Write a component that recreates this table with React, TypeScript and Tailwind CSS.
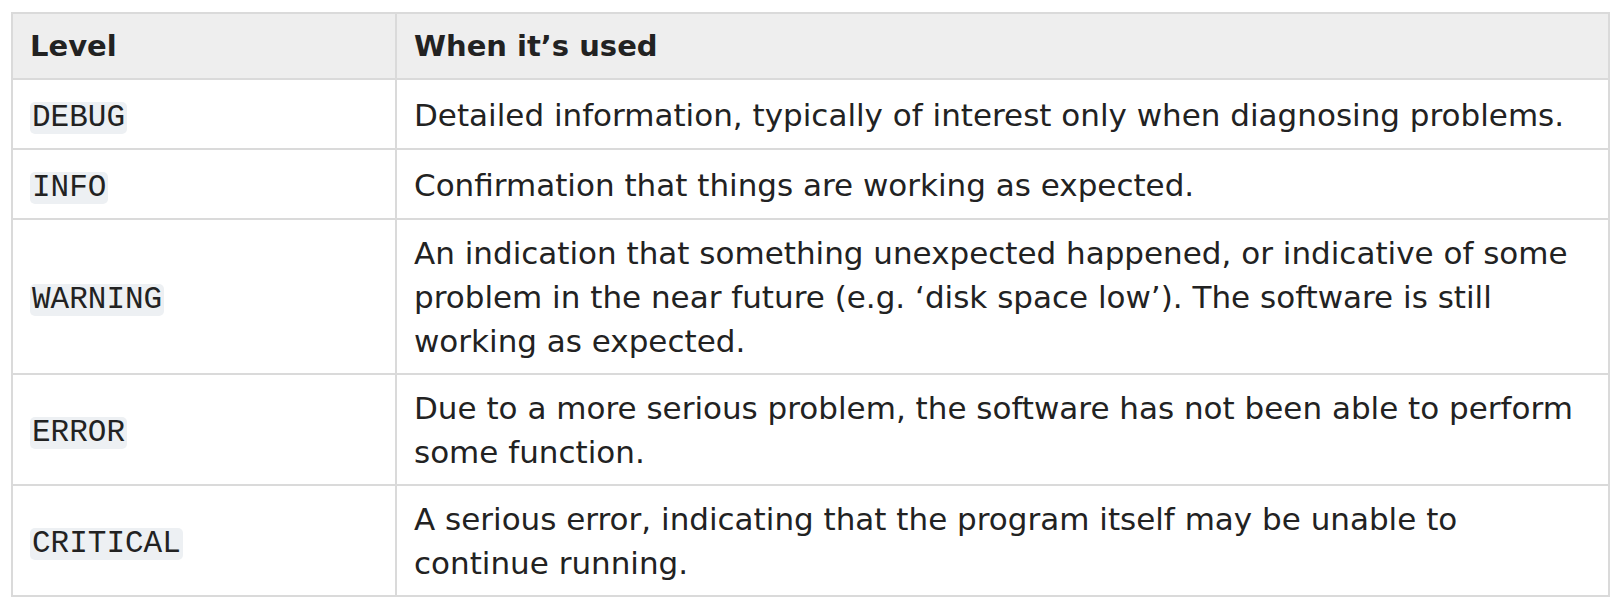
import React from 'react';

interface LevelRow {
  level: string;
  text: string;
}

const rows: LevelRow[] = [
  { level: 'DEBUG', text: 'Detailed information, typically of interest only when diagnosing problems.' },
  { level: 'INFO', text: 'Confirmation that things are working as expected.' },
  {
    level: 'WARNING',
    text: 'An indication that something unexpected happened, or indicative of some problem in the near future (e.g. \u2018disk space low\u2019). The software is still working as expected.',
  },
  { level: 'ERROR', text: 'Due to a more serious problem, the software has not been able to perform some function.' },
  { level: 'CRITICAL', text: 'A serious error, indicating that the program itself may be unable to continue running.' },
];

const App: React.FC = () => {
  return (
    <div className="bg-white w-[1624px] h-[616px] pt-[12px] pl-[11px] font-['DejaVu_Sans',sans-serif] text-[#222222]">
      <table className="w-[1599px] border-collapse border-2 border-[#dadada] text-[31px] leading-[44px]">
        <thead>
          <tr className="bg-[#eeeeee]">
            <th className="w-[384px] border-2 border-[#dadada] px-[17px] py-[10px] text-left text-[29px] font-bold">Level</th>
            <th className="border-2 border-[#dadada] px-[17px] py-[10px] text-left text-[29px] font-bold">When it’s used</th>
          </tr>
        </thead>
        <tbody>
          {rows.map(row => (
            <tr key={row.level}>
              <td className="h-[70px] border-2 border-[#dadada] px-[17px] pt-[11px] pb-[10px] align-middle">
                <code className="inline-block h-[32px] rounded-[5px] bg-[#edf0f3] px-[2px] font-['Courier_New','Nimbus_Mono_PS','FreeMono','Liberation_Mono',monospace] text-[31px] leading-[32px]">
                  {row.level}
                </code>
              </td>
              <td className="border-2 border-[#dadada] px-[17px] pt-[11px] pb-[10px] align-middle">{row.text}</td>
            </tr>
          ))}
        </tbody>
      </table>
    </div>
  );
};

export default App;
